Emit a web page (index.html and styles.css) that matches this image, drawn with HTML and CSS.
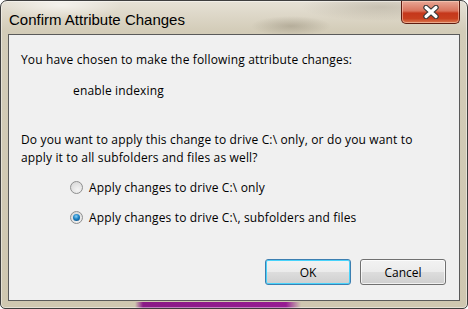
FILE: index.html
```html
<!DOCTYPE html>
<html lang="en">

<head>
    <meta charset="UTF-8">
    <title>Confirm Attribute Changes</title>
    <link rel="stylesheet" href="styles.css">
</head>

<body>
    <div class="window">
        <div class="titlebar">
            <span class="title">Confirm Attribute Changes</span>
            <button class="btnclose">
                <svg width="18" height="14" viewBox="0 0 18 14">
                    <path d="M4 2.5 L14 11.5 M14 2.5 L4 11.5" stroke="#3a3a3a" stroke-width="5.5" stroke-linecap="round" />
                    <path d="M4 2.5 L14 11.5 M14 2.5 L4 11.5" stroke="#fff" stroke-width="3.2" stroke-linecap="round" />
                </svg>
            </button>
        </div>

        <div class="client">
            <p class="line">You have chosen to make the following attribute changes:</p>
            <p class="change">enable indexing</p>
            <p class="question">Do you want to apply this change to drive C:\ only, or do you want to<br>apply it to all subfolders and files as well?</p>

            <div class="options">
                <label class="option"><span class="radio"></span>Apply changes to drive C:\ only</label>
                <label class="option"><span class="radio checked"></span>Apply changes to drive C:\, subfolders and files</label>
            </div>

            <div class="buttons">
                <button class="btn btnok">OK</button>
                <button class="btn">Cancel</button>
            </div>
        </div>
    </div>
</body>

</html>
```

FILE: styles.css
```css
html,
body {
    margin: 0;
    padding: 0;
    background: #fff;
}

.window {
    width: 468px;
    height: 309px;
    box-sizing: border-box;
    border: 1px solid #3e3e3e;
    border-radius: 7px 7px 5px 5px;
    padding: 0 7px 7px 7px;
    display: flex;
    flex-direction: column;
    background:
        linear-gradient(to right, transparent 134px, #8a1a86 142px, #961c92 285px, transparent 300px) bottom / 100% 6px no-repeat,
        radial-gradient(ellipse 40px 10px at 290px 25px, rgba(120, 110, 90, 0.35), transparent),
        radial-gradient(ellipse 60px 14px at 60px 4px, rgba(255, 255, 255, 0.6), transparent),
        radial-gradient(ellipse 80px 14px at 380px 6px, rgba(120, 110, 90, 0.25), transparent),
        linear-gradient(to bottom, #e6e1d6 0px, #d3ccb8 30px, #cfc7b0 100%);
    box-shadow: inset 0 0 0 1px rgba(255, 255, 255, 0.45);
}

.titlebar {
    height: 33px;
    display: flex;
    justify-content: space-between;
    align-items: flex-start;
}

.title {
    font-family: "Liberation Sans", Arial, sans-serif;
    font-size: 15px;
    color: #000;
    margin-top: 10px;
    margin-left: 1px;
}

.btnclose {
    width: 59px;
    height: 23px;
    padding: 0;
    border: 1px solid #5e1c10;
    border-top: none;
    border-radius: 0 0 5px 5px;
    background: linear-gradient(to bottom, #e8a796 0%, #d9735c 45%, #c5371b 55%, #c8401f 80%, #dc7a50 100%);
    box-shadow: inset 0 0 0 1px rgba(255, 220, 200, 0.5);
    display: flex;
    justify-content: center;
    align-items: center;
}

.client {
    flex: 1;
    border: 1px solid #5a5a5a;
    background-color: #f0f0f0;
    padding: 0 12px;
    font-family: "Open Sans", "Liberation Sans", sans-serif;
    font-size: 12px;
    letter-spacing: 0.15px;
    color: #000;
    display: flex;
    flex-direction: column;
}

.client p {
    margin: 0;
    line-height: 16px;
}

.line {
    margin-top: 17px !important;
}

.change {
    margin-top: 15px !important;
    padding-left: 52px;
}

.question {
    margin-top: 32px !important;
    line-height: 18px !important;
}

.options {
    margin-top: 13px;
    padding-left: 49px;
    display: flex;
    flex-direction: column;
    gap: 16px;
}

.option {
    display: flex;
    align-items: center;
    gap: 6px;
    height: 14px;
}

.radio {
    width: 13px;
    height: 13px;
    box-sizing: border-box;
    border-radius: 50%;
    border: 1px solid #8e8f8f;
    background: radial-gradient(circle at 60% 70%, #f4f4f4, #d4d4d4);
    display: flex;
    justify-content: center;
    align-items: center;
}

.radio.checked::after {
    content: "";
    width: 7px;
    height: 7px;
    border-radius: 50%;
    background: radial-gradient(circle at 45% 35%, #8fd0f3 0%, #1a82c4 45%, #0c3d6e 100%);
}

.buttons {
    margin-top: auto;
    margin-bottom: 15px;
    display: flex;
    justify-content: flex-end;
    gap: 9px;
    margin-right: 1px;
}

.btn {
    width: 86px;
    height: 26px;
    border: 1px solid #707070;
    border-radius: 3px;
    background: linear-gradient(to bottom, #f2f2f2 0%, #ebebeb 50%, #dddddd 50%, #cfcfcf 100%);
    box-shadow: inset 0 0 0 1px rgba(255, 255, 255, 0.7);
    font-family: "Open Sans", "Liberation Sans", sans-serif;
    font-size: 12px;
    color: #000;
    padding: 0;
}

.btnok {
    border-color: #3c7fb1;
    box-shadow: inset 0 0 0 1px #48d3fb;
}
```
